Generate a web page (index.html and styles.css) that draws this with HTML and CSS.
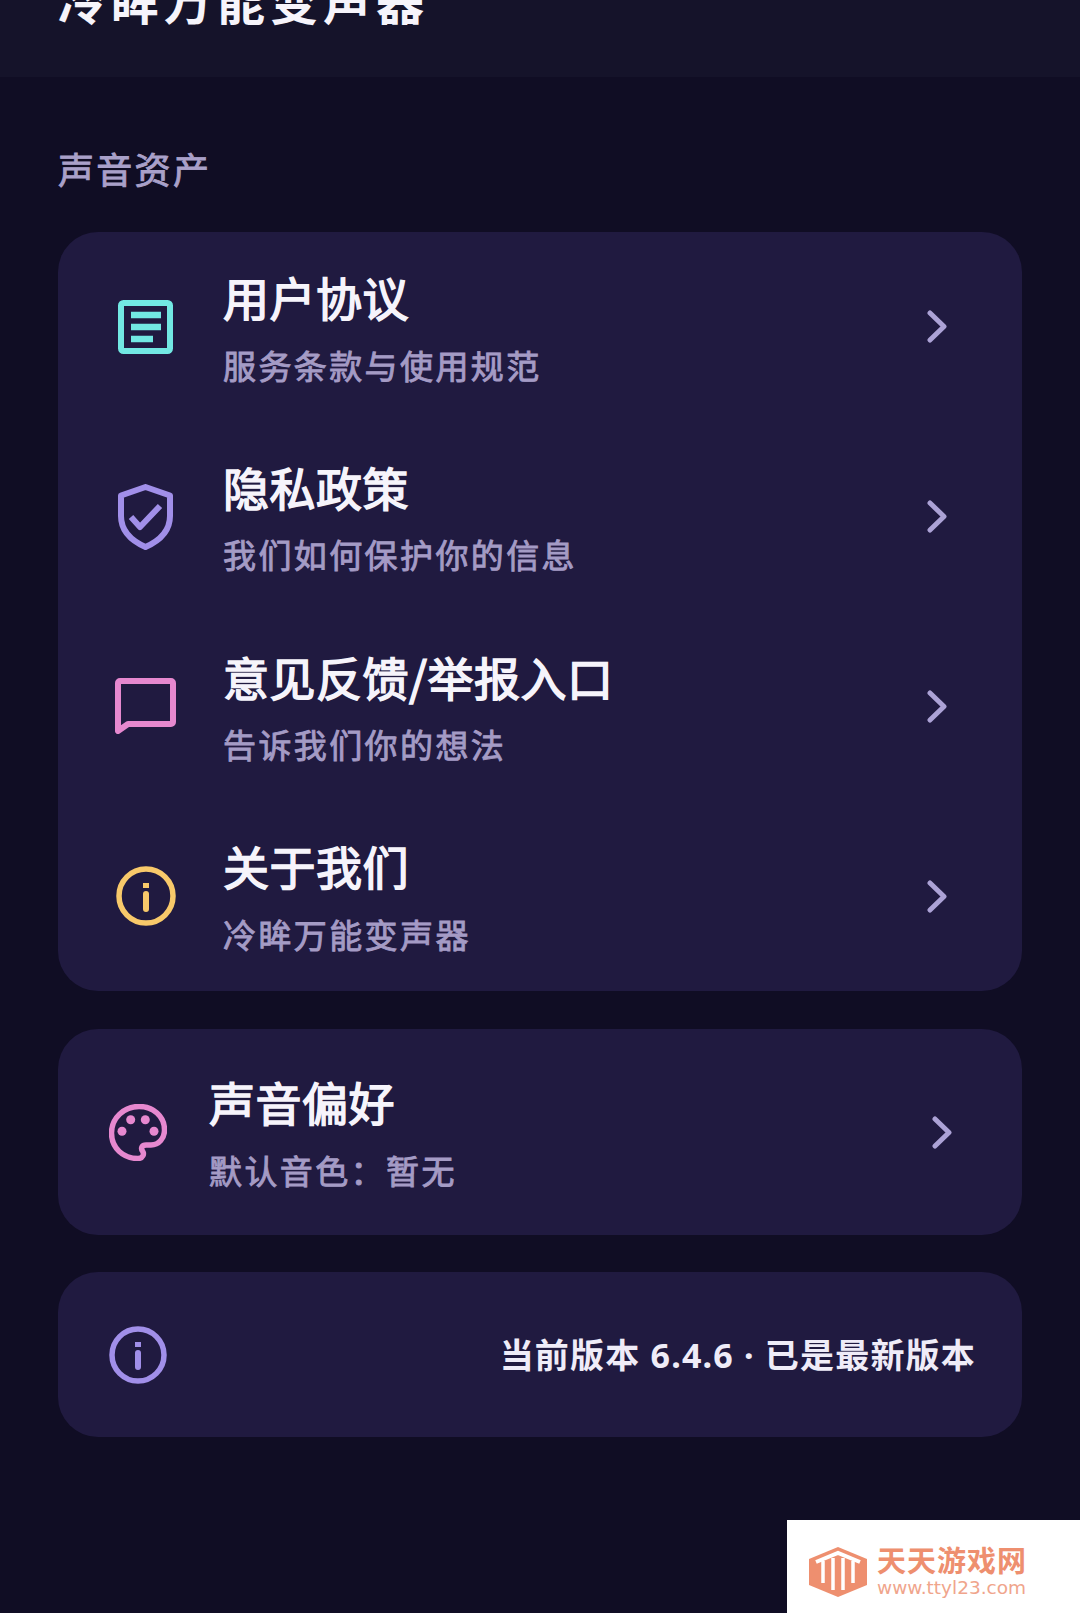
FILE: index.html
```html
<!DOCTYPE html>
<html lang="zh-CN">
<head>
    <meta charset="UTF-8">
    <meta name="viewport" content="width=device-width, initial-scale=1.0">
    <title>冷眸万能变声器</title>
    <link rel="stylesheet" href="styles.css">
</head>
<body>
    <header class="top-bar">
        <h1>冷眸万能变声器</h1>
    </header>

    <main>
        <h2 class="section-label">声音资产</h2>

        <!-- Links -->
        <section class="card">
            <a class="row">
                <span class="icon-box">
                    <svg width="55" height="54" viewBox="0 0 55 54" fill="none" stroke="#72e8e3" stroke-width="6" stroke-linejoin="round">
                        <rect x="3" y="3" width="49" height="48" rx="2.5"/>
                        <path d="M13 15H43M13 27H43M13 39H35" stroke-width="6.5"/>
                    </svg>
                </span>
                <span class="row-text">
                    <span class="row-title">用户协议</span>
                    <span class="row-sub">服务条款与使用规范</span>
                </span>
                <svg class="chevron" width="20" height="33" viewBox="0 0 20 33" fill="none"><path d="M3 3L17 16.5L3 30"/></svg>
            </a>
            <a class="row">
                <span class="icon-box">
                    <svg width="55" height="66" viewBox="0 0 55 66" fill="none" stroke="#a18fe9" stroke-width="6" stroke-linejoin="round" stroke-linecap="round">
                        <path d="M27.5 3L52 11.5V32C52 47 41 57 27.5 63C14 57 3 47 3 32V11.5Z"/>
                        <path d="M13 33L22 43L42 22" stroke-linecap="butt"/>
                    </svg>
                </span>
                <span class="row-text">
                    <span class="row-title">隐私政策</span>
                    <span class="row-sub">我们如何保护你的信息</span>
                </span>
                <svg class="chevron" width="20" height="33" viewBox="0 0 20 33" fill="none"><path d="M3 3L17 16.5L3 30"/></svg>
            </a>
            <a class="row">
                <span class="icon-box">
                    <svg width="61" height="56" viewBox="0 0 61 56" fill="none" stroke="#e688cf" stroke-width="6" stroke-linejoin="round">
                        <path d="M5 3H56A2 2 0 0 1 58 5V44A2 2 0 0 1 56 46H13L3 53V5A2 2 0 0 1 5 3Z"/>
                    </svg>
                </span>
                <span class="row-text">
                    <span class="row-title">意见反馈/举报入口</span>
                    <span class="row-sub">告诉我们你的想法</span>
                </span>
                <svg class="chevron" width="20" height="33" viewBox="0 0 20 33" fill="none"><path d="M3 3L17 16.5L3 30"/></svg>
            </a>
            <a class="row">
                <span class="icon-box">
                    <svg width="60" height="60" viewBox="0 0 60 60" fill="none" stroke="#f8c96a" stroke-width="5.5" stroke-linecap="round">
                        <circle cx="30" cy="30" r="27"/>
                        <path d="M30 28V43" stroke-width="6"/>
                        <path d="M30 17V22" stroke-linecap="butt" stroke-width="6"/>
                    </svg>
                </span>
                <span class="row-text">
                    <span class="row-title">关于我们</span>
                    <span class="row-sub">冷眸万能变声器</span>
                </span>
                <svg class="chevron" width="20" height="33" viewBox="0 0 20 33" fill="none"><path d="M3 3L17 16.5L3 30"/></svg>
            </a>
        </section>

        <section class="card card-voice">
            <a class="row">
                <span class="icon-box">
                    <svg width="58" height="57" viewBox="0 0 58 57" fill="none" stroke="#e688cf" stroke-width="5.5">
                        <path d="M30 2.5C15 2.5 2.5 14 2.5 29C2.5 44 14 54.5 29 54.5C34 54.5 35.5 50 33.5 47C31.5 44 33 41 37 41H42C50 41 55.5 34 55.5 26C55.5 12 44 2.5 30 2.5Z" stroke-linejoin="round"/>
                        <g fill="#e688cf" stroke="none">
                            <circle cx="21.7" cy="15.7" r="4.5"/>
                            <circle cx="36.3" cy="15.7" r="4.5"/>
                            <circle cx="13" cy="27.3" r="4.5"/>
                            <circle cx="45" cy="27.3" r="4.5"/>
                        </g>
                    </svg>
                </span>
                <span class="row-text">
                    <span class="row-title">声音偏好</span>
                    <span class="row-sub">默认音色：暂无</span>
                </span>
                <svg class="chevron" width="20" height="33" viewBox="0 0 20 33" fill="none"><path d="M3 3L17 16.5L3 30"/></svg>
            </a>
        </section>

        <section class="card card-version">
            <svg width="58" height="58" viewBox="0 0 58 58" fill="none" stroke="#a18fe9" stroke-width="5.5" stroke-linecap="round">
                <circle cx="29" cy="29" r="26"/>
                <path d="M29 27V41" stroke-width="6"/>
                <path d="M29 16V21" stroke-linecap="butt" stroke-width="6"/>
            </svg>
            <span class="version-text">当前版本<span class="version-num"> 6.4.6 · </span>已是最新版本</span>
        </section>
    </main>

    <!-- Site stamp over the page corner -->
    <div class="stamp">
        <svg class="stamp-logo" width="58" height="50" viewBox="0 0 58 50">
            <polygon points="29,0 58,12 58,38 29,50 0,38 0,12" fill="#ee8f6f"/>
            <path d="M7 15L29 6L51 15" fill="none" stroke="#fff" stroke-width="4"/>
            <path d="M14 14V36M24 11V43M34 11V43M44 14V36" fill="none" stroke="#fff" stroke-width="3.5"/>
        </svg>
        <div class="stamp-text">
            <span class="stamp-name">天天游戏网</span>
            <span class="stamp-url">www.ttyl23.com</span>
        </div>
    </div>
</body>
</html>
```

FILE: styles.css
```css
* {
    box-sizing: border-box;
}
html, body {
    height: 100%;
}
body {
    margin: 0;
    height: 1613px;
    overflow: hidden;
    position: relative;
    background-color: #100d24;
    font-family: "Noto Sans CJK SC", "Noto Sans", sans-serif;
}
.top-bar {
    height: 77px;
    background-color: #15132a;
    overflow: hidden;
    display: flex;
    align-items: flex-end;
    padding: 0 58px 48px;
}
.top-bar h1 {
    margin: 0;
    font-size: 48px;
    line-height: 60px;
    letter-spacing: 5px;
    font-weight: 700;
    color: #f6f4fb;
    white-space: nowrap;
}
main {
    padding: 0 58px;
}
.section-label {
    margin: 0;
    padding-top: 68px;
    height: 155px;
    font-size: 36px;
    line-height: 46px;
    letter-spacing: 2.3px;
    font-weight: 400;
    -webkit-text-stroke: 0.9px #a9a0c9;
    color: #a9a0c9;
}
.card {
    background-color: #201a40;
    border-radius: 40px;
}
.row {
    display: flex;
    align-items: center;
    height: 189.75px;
    padding: 0 75px 0 56.5px;
}
.icon-box {
    width: 62px;
    margin-right: 46.5px;
    display: flex;
    justify-content: center;
    flex-shrink: 0;
}
.row-text {
    flex: 1;
    display: flex;
    flex-direction: column;
    padding-bottom: 1px;
}
.row-title {
    font-size: 46px;
    line-height: 60px;
    font-weight: 400;
    -webkit-text-stroke: 1.5px #f6f4fb;
    color: #f6f4fb;
    letter-spacing: 0.5px;
}
.row-sub {
    margin-top: 16.5px;
    font-size: 33px;
    line-height: 44px;
    letter-spacing: 2.4px;
    font-weight: 400;
    -webkit-text-stroke: 0.9px #a49bc5;
    color: #a49bc5;
}
.chevron {
    flex-shrink: 0;
}
.chevron path {
    stroke: #aca2d6;
    stroke-width: 5;
    stroke-linecap: round;
    stroke-linejoin: round;
}
.card-voice {
    margin-top: 38px;
}
.card-voice .row {
    height: 206px;
    padding: 0 70px 0 51px;
}
.card-voice .icon-box {
    width: 58px;
    margin-right: 42px;
}
.card-version {
    margin-top: 37px;
    height: 165px;
    display: flex;
    align-items: center;
    justify-content: space-between;
    padding: 0 46px 0 51px;
}
.version-text {
    font-size: 34px;
    line-height: 44px;
    font-weight: 700;
    letter-spacing: 1.2px;
    color: #efecf8;
}
.version-num {
    font-family: "Noto Sans", sans-serif;
}
.stamp {
    position: absolute;
    right: 0;
    bottom: 0;
    width: 293px;
    height: 93px;
    background-color: #fff;
    display: flex;
    align-items: center;
    gap: 10px;
    padding: 10px 0 0 22px;
}
.stamp-text {
    display: flex;
    flex-direction: column;
    gap: 5px;
}
.stamp-name {
    font-size: 29px;
    line-height: 28px;
    font-weight: 700;
    letter-spacing: 1px;
    color: #ee8f6f;
}
.stamp-url {
    font-family: "DejaVu Sans", sans-serif;
    font-size: 18.5px;
    line-height: 20px;
    color: #f0a58c;
    white-space: nowrap;
}
```
